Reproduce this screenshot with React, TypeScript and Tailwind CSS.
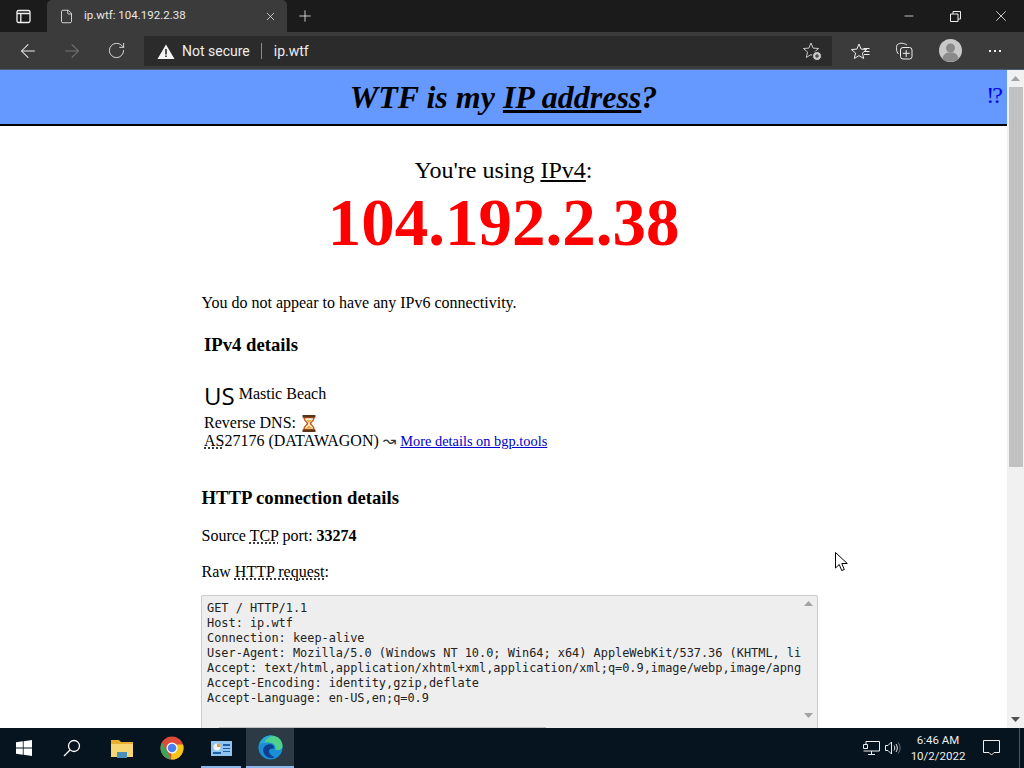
import React from 'react';
import { ArrowLeft, ArrowRight, RotateCw, X, Plus, Minus, File } from 'lucide-react';

const requestLines = [
  'GET / HTTP/1.1',
  'Host: ip.wtf',
  'Connection: keep-alive',
  'User-Agent: Mozilla/5.0 (Windows NT 10.0; Win64; x64) AppleWebKit/537.36 (KHTML, li',
  'Accept: text/html,application/xhtml+xml,application/xml;q=0.9,image/webp,image/apng',
  'Accept-Encoding: identity,gzip,deflate',
  'Accept-Language: en-US,en;q=0.9',
];

const STAR = 'M9 2 11.100 7.100 16.600 7.500 12.400 11.100 13.700 16.500 9 13.600 4.300 16.500 5.600 11.100 1.400 7.500 6.900 7.100z';

const TabBar: React.FC = () => (
  <div className="h-[32px] shrink-0 bg-[#1b1b1b] flex items-end text-white">
    <div className="w-[47px] h-[32px] flex items-center justify-center">
      <svg width="15" height="15" viewBox="0 0 15 15" fill="none" stroke="#f2f2f2" strokeWidth="1.300">
        <rect x="1" y="1.500" width="13" height="12" rx="1.500" />
        <path d="M1 4.500h13M4.800 4.500v9" />
      </svg>
    </div>
    <div className="w-[240px] h-[32px] bg-[#3b3b3b] rounded-t-[5px] flex items-center pl-[12px] pr-[10px]">
      <File size={15} strokeWidth={1.3} className="text-[#f2f2f2]" />
      <span className="ml-[10px] font-['Roboto',sans-serif] text-[11.5px] text-[#e8e8e8] flex-1">ip.wtf: 104.192.2.38</span>
      <X size={13} strokeWidth={1.4} className="text-[#e8e8e8]" />
    </div>
    <div className="w-[36px] h-[32px] flex items-center justify-center">
      <Plus size={18} strokeWidth={1.1} className="text-[#eeeeee]" />
    </div>
    <div className="flex-1" />
    <div className="w-[46px] h-[32px] flex items-center justify-center">
      <Minus size={14} strokeWidth={1.3} className="text-[#f2f2f2]" />
    </div>
    <div className="w-[46px] h-[32px] flex items-center justify-center">
      <svg width="11" height="11" viewBox="0 0 11 11" fill="none" stroke="#eeeeee">
        <path d="M.5 3h7.500v7.500h-7.500zM3 3v-2.500h7.500v7.500h-2.500" />
      </svg>
    </div>
    <div className="w-[46px] h-[32px] flex items-center justify-center">
      <X size={18} strokeWidth={1.1} className="text-[#eeeeee]" />
    </div>
  </div>
);

const Toolbar: React.FC = () => (
  <div className="h-[38px] shrink-0 bg-[#3b3b3b] border-b border-[#4c5a72] flex items-start text-white">
    <div className="w-[56px] h-[37px] flex items-center justify-center">
      <ArrowLeft size={22} strokeWidth={1.1} className="text-[#eeeeee]" />
    </div>
    <div className="w-[32px] h-[37px] flex items-center justify-center">
      <ArrowRight size={22} strokeWidth={1.1} className="text-[#777777]" />
    </div>
    <div className="w-[56px] h-[37px] flex items-center justify-center">
      <RotateCw size={19} strokeWidth={1.1} className="text-[#eeeeee]" />
    </div>
    <div className="w-[688px] h-[30px] mt-[4px] bg-[#2b2b2b] flex items-center pl-[13px] pr-[10px] font-['Roboto',sans-serif] text-[14px] text-[#eeeeee]">
      <svg width="18" height="15" viewBox="0 0 18 15">
        <path d="M9 .5 17.500 15H.5z" fill="#f5f5f5" />
        <path d="M8.200 5h1.600v5.500h-1.600zM8.200 11.500h1.600v1.600h-1.600z" fill="#2b2b2b" />
      </svg>
      <span className="ml-[7px]">Not secure</span>
      <span className="ml-[11px] w-px h-[16px] bg-[#8a8a8a]" />
      <span className="ml-[12px]">ip.wtf</span>
      <div className="flex-1" />
      <svg width="20" height="20" viewBox="0 0 20 20" fill="none" stroke="#c8c8c8" strokeWidth="1">
        <path d={STAR} />
        <circle cx="15" cy="15" r="4.500" fill="#c8c8c8" stroke="#2b2b2b" />
        <path d="M13 15h4M15 13v4" stroke="#2b2b2b" />
      </svg>
    </div>
    <div className="w-[52px] h-[37px] ml-[2px] flex items-center justify-center">
      <svg width="19" height="18" viewBox="0 0 19 18" fill="none" stroke="#eeeeee" strokeWidth="1">
        <path d={STAR} transform="translate(-1 0)" />
        <path d="M12.500 6.500h6M13 9.500h5.500M13 12.500h5.500" />
      </svg>
    </div>
    <div className="w-[36px] h-[37px] flex items-center justify-center">
      <svg width="18" height="18" viewBox="0 0 18 18" fill="none" stroke="#eeeeee" strokeWidth="1">
        <path d="M3.500 12C1 10 1 3.500 2.500 2.500 5 .5 9 1 12 3" />
        <rect x="5.500" y="5.500" width="11.500" height="11.500" rx="2.500" />
        <path d="M11.200 8v7M7.800 11.300h7" />
      </svg>
    </div>
    <div className="w-[56px] h-[37px] flex items-center justify-center">
      <svg width="23" height="23" viewBox="0 0 23 23">
        <circle cx="11.500" cy="11.500" r="11.500" fill="#c9c9c9" />
        <circle cx="11.500" cy="9" r="4.500" fill="#8a8a8a" />
        <path d="M3.500 19.500c1-5 4-6 8-6s7 1 8 6a11.500 11.500 0 0 1-16 0z" fill="#8a8a8a" />
      </svg>
    </div>
    <div className="w-[34px] h-[37px] flex items-center justify-center gap-[3px]">
      <span className="w-[2px] h-[2px] bg-[#eeeeee]" />
      <span className="w-[2px] h-[2px] bg-[#eeeeee]" />
      <span className="w-[2px] h-[2px] bg-[#eeeeee]" />
    </div>
  </div>
);

const Triangle: React.FC<{ down?: boolean; color: string }> = ({ down, color }) => (
  <svg width="9" height="5" viewBox="0 0 9 5" fill={color}>
    <path d={down ? 'M0 0h9L4.500 5z' : 'M0 5h9L4.500 0z'} />
  </svg>
);

const Scrollbar: React.FC = () => (
  <div className="w-[17px] shrink-0 bg-[#f1f1f1] flex flex-col items-center">
    <div className="h-[17px] flex items-center justify-center">
      <Triangle color="#a3a3a3" />
    </div>
    <div className="w-[14px] h-[380px] bg-[#c1c1c1]" />
    <div className="flex-1" />
    <div className="h-[17px] flex items-center justify-center">
      <Triangle down color="#505050" />
    </div>
  </div>
);

const Abbr: React.FC<{ children: React.ReactNode }> = ({ children }) => (
  <span className="underline decoration-dotted decoration-black underline-offset-2">{children}</span>
);

const Page: React.FC = () => (
  <div className="flex-1 min-w-0 bg-white text-black overflow-hidden font-['Liberation_Serif',serif] text-[16px]">
    <div className="relative h-[56px] bg-[#6699ff] border-b-2 border-black flex items-center justify-center">
      <h1 className="text-[32px] font-bold italic leading-none">
        WTF is my <span className="underline">IP address</span>?
      </h1>
      <a className="absolute right-[6px] top-[11px] text-[24px] leading-[28px] tracking-[-2px] text-[#0000dd]">!?</a>
    </div>

    <div className="flex flex-col items-center mt-[30px]">
      <div className="text-[24px] leading-[28px]">
        You're using <span className="underline">IPv4</span>:
      </div>
      <div className="text-[67px] leading-[76px] font-bold text-[#ff0000]">104.192.2.38</div>
    </div>

    <div className="pl-[201px] w-[818px]">
      <p className="mt-[34px] pl-[0.5px] leading-[18px]">You do not appear to have any IPv6 connectivity.</p>
      <h3 className="mt-[23px] pl-[3px] text-[18.72px] leading-[20px] font-bold">IPv4 details</h3>
      <div className="pl-[3px] mt-[27px]">
        <div className="flex items-start h-[31px]">
          <span className="font-['Open_Sans',sans-serif] text-[24px] leading-[27px]">US</span>
          <span className="ml-[4px] leading-[18px] mt-[3px]">Mastic Beach</span>
        </div>
        <div className="flex items-center h-[18px] mt-px">
          Reverse DNS:
          <svg className="ml-[6px]" width="14" height="17" viewBox="0 0 14 17">
            <path d="M2 2.500h10c0 4-3.500 4.500-3.500 6s3.500 2 3.500 6H2c0-4 3.500-4.500 3.500-6S2 6.500 2 2.500z" fill="#f8f0d8" stroke="#c9581f" strokeWidth="1.500" />
            <path d="M4.500 5h5L7 8zM3.500 13.500 7 10.500l3.500 3z" fill="#e8b030" />
            <rect x="0.500" y="0" width="13" height="2.500" fill="#5b3418" />
            <rect x="0.500" y="14.500" width="13" height="2.500" fill="#5b3418" />
          </svg>
        </div>
        <div className="leading-[18px]">
          <Abbr>AS</Abbr>27176 (DATAWAGON) <span className="font-['DejaVu_Sans',sans-serif] text-[16px] leading-none text-[#333333]">↝</span>{' '}
          <a className="text-[14.4px] text-[#0000cc] underline">More details on bgp.tools</a>
        </div>
      </div>
      <h2 className="mt-[38px] pl-[0.5px] text-[18.72px] leading-[20px] font-bold">HTTP connection details</h2>
      <p className="mt-[19px] pl-[0.5px] leading-[18px]">
        Source <Abbr>TCP</Abbr> port: <strong>33274</strong>
      </p>
      <p className="mt-[18px] pl-[0.5px] leading-[18px]">
        Raw <Abbr>HTTP request</Abbr>:
      </p>
      <div className="relative mt-[14px] h-[160px] bg-[#eeeeee] border border-[#cccccc] rounded-[2px] pl-[5px] pt-[5px] overflow-hidden">
        <pre className="font-['DejaVu_Sans_Mono',monospace] text-[11.9px] leading-[15px] text-[#222222]">
          {requestLines.join('\n')}
        </pre>
        <div className="absolute right-[4px] top-[5px]"><Triangle color="#a3a3a3" /></div>
        <div className="absolute right-[4px] top-[117px]"><Triangle down color="#a3a3a3" /></div>
        <div className="absolute left-[17px] top-[131px] w-[327px] h-[14px] bg-[#c1c1c1]" />
      </div>
    </div>
  </div>
);

const EdgeLogo: React.FC = () => (
  <svg width="25" height="25" viewBox="0 0 26 26">
    <circle cx="13" cy="13" r="12.500" fill="#1b8ed6" />
    <path d="M2 9C5 1 14-1 20 2c4 2 6 7 5.500 10.500-.5 3-4 3.500-7.500 3 1-3-.5-7-5.500-7.500C8 7.600 4 8 2 9z" fill="#4fd18c" />
    <path d="M2 9C5 1 12-.5 17 1 12 1 8 4 7 8 5 8 3 8.500 2 9z" fill="#28a8d8" />
    <path d="M13 24c-5-1-8-5-7.500-9 .5-4 5-6.500 9-5 2 1 2.500 3 2 4.500-2-1-4.500-.5-5 2-.5 3 3 6 6 6.500-1.500.8-3 1.300-4.500 1z" fill="#0b3f8f" />
  </svg>
);

const ChromeLogo: React.FC = () => (
  <svg width="24" height="24" viewBox="0 0 24 24">
    <circle cx="12" cy="12" r="11.500" fill="#dd4b39" />
    <path d="M1.900 6.500 7 15.500l4 7.900A11.500 11.500 0 0 1 1.900 6.500z" fill="#3aa757" />
    <path d="M23 8.500H12l-1 15A11.500 11.500 0 0 0 23 8.500z" fill="#f5c518" />
    <circle cx="12" cy="12" r="5.500" fill="#ffffff" />
    <circle cx="12" cy="12" r="4.300" fill="#4a80ee" />
  </svg>
);

const Taskbar: React.FC = () => (
  <div className="h-[40px] shrink-0 bg-[#05141f] flex items-stretch text-white">
    <div className="w-[48px] flex items-center justify-center">
      <svg width="16" height="16" viewBox="0 0 16 16" fill="#ffffff">
        <path d="M0 2.300 6.800 1.300V7.600H0zM7.600 1.200 16 0V7.600H7.600zM0 8.400H6.800V14.700L0 13.700zM7.600 8.400H16V16L7.600 14.800z" />
      </svg>
    </div>
    <div className="w-[48px] flex items-center justify-center">
      <svg width="18" height="18" viewBox="0 0 18 18" fill="none" stroke="#ffffff" strokeWidth="1.300">
        <circle cx="11" cy="7" r="5.500" />
        <path d="M7 11 1 17" />
      </svg>
    </div>
    <div className="w-[52px] flex items-center justify-center">
      <svg width="22" height="19" viewBox="0 0 22 19">
        <path d="M0 1h8l2 2h12v15H0z" fill="#e8b030" />
        <path d="M0 5h22v13H0z" fill="#f7d774" />
        <path d="M6 13h10v6H6z" fill="#4a8fb8" />
      </svg>
    </div>
    <div className="w-[48px] flex items-center justify-center">
      <ChromeLogo />
    </div>
    <div className="relative w-[50px] flex items-center justify-center">
      <svg width="21" height="15" viewBox="0 0 21 15">
        <rect width="21" height="15" fill="#8fc4ee" />
        <circle cx="6" cy="6" r="3.500" fill="#f0f6fc" />
        <path d="M6 6V2.500A3.500 3.500 0 0 1 9.500 6z" fill="#e0a030" />
        <path d="M12 3h7v2h-7zM12 7h7v1h-7zM12 10h7v1h-7zM2 11h8v2H2z" fill="#1f5fa8" />
      </svg>
      <span className="absolute left-[5px] right-[5px] bottom-0 h-[2px] bg-[#8ab8e8]" />
    </div>
    <div className="w-[48px] flex items-center justify-center bg-[#2b3a45] border-b-[2px] border-[#8ab8e8]">
      <EdgeLogo />
    </div>
    <div className="flex-1" />
    <div className="w-[24px] flex items-center justify-center">
      <svg width="17" height="14" viewBox="0 0 17 14" fill="none" stroke="#eeeeee" strokeWidth="1">
        <path d="M3 3.500V.5h13.500V10H.5M8.500 10v3M5 13.500h7M.5 3.500h4v4h-4z" />
      </svg>
    </div>
    <div className="w-[20px] flex items-center justify-center">
      <svg width="16" height="14" viewBox="0 0 16 14" fill="none" stroke="#eeeeee" strokeWidth="1">
        <path d="M.5 4.500h2.500L6.500 1v12L3 9.500H.5zM9 4.500c1 1.500 1 3.500 0 5M11 3c1.800 2.500 1.800 5.500 0 8" />
        <path d="M13 1.500c2.800 3.500 2.800 7.500 0 11" stroke="#777777" />
      </svg>
    </div>
    <div className="w-[70px] flex flex-col items-center justify-center font-['Roboto',sans-serif] text-[11.5px] leading-[16px] text-[#eeeeee]">
      <span>6:46 AM</span>
      <span>10/2/2022</span>
    </div>
    <div className="w-[36px] flex items-center justify-center">
      <svg width="17" height="16" viewBox="0 0 17 16" fill="none" stroke="#eeeeee" strokeWidth="1">
        <path d="M.5.500h16v12h-5.500l-2.500 2.500-2.500-2.500H.5z" />
      </svg>
    </div>
    <div className="w-[15px] flex justify-end">
      <div className="w-[5px] border-l border-[#4a5560]" />
    </div>
  </div>
);

export default function App() {
  return (
    <div className="relative w-[1024px] h-[768px] overflow-hidden flex flex-col">
      <TabBar />
      <Toolbar />
      <div className="flex-1 min-h-0 flex">
        <Page />
        <Scrollbar />
      </div>
      <Taskbar />
      {/* mouse pointer over the page */}
      <svg className="absolute left-[835px] top-[552px]" width="14" height="20" viewBox="0 0 14 20">
        <path d="M.5.500v15.500l3.700-3.500 2.500 6 2.600-1-2.500-6h5.500z" fill="#ffffff" stroke="#000000" />
      </svg>
    </div>
  );
}
